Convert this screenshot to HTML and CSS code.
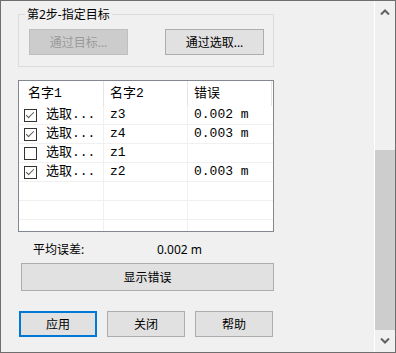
FILE: index.html
```html
<!DOCTYPE html>
<html lang="zh-CN">
<head>
    <meta charset="UTF-8">
    <title>指定目标</title>
    <link rel="stylesheet" href="styles.css">
</head>
<body>
    <div class="window">
        <div class="content">
            <fieldset class="group">
                <legend>第2步-指定目标</legend>
                <div class="group-buttons">
                    <button class="btn" disabled>通过目标...</button>
                    <button class="btn">通过选取...</button>
                </div>
            </fieldset>

            <div class="list">
                <div class="list-head">
                    <div class="cell first">名字1</div>
                    <div class="cell">名字2</div>
                    <div class="cell">错误</div>
                </div>
                <div class="list-row">
                    <div class="cell first"><span class="check on"></span>选取...</div>
                    <div class="cell">z3</div>
                    <div class="cell">0.002 m</div>
                </div>
                <div class="list-row">
                    <div class="cell first"><span class="check on"></span>选取...</div>
                    <div class="cell">z4</div>
                    <div class="cell">0.003 m</div>
                </div>
                <div class="list-row">
                    <div class="cell first"><span class="check"></span>选取...</div>
                    <div class="cell">z1</div>
                    <div class="cell"></div>
                </div>
                <div class="list-row">
                    <div class="cell first"><span class="check on"></span>选取...</div>
                    <div class="cell">z2</div>
                    <div class="cell">0.003 m</div>
                </div>
                <div class="list-row"><div class="cell"></div><div class="cell"></div><div class="cell"></div></div>
                <div class="list-row"><div class="cell"></div><div class="cell"></div><div class="cell"></div></div>
                <div class="list-row"><div class="cell"></div><div class="cell"></div><div class="cell"></div></div>
            </div>

            <div class="avg">
                <span class="avg-label">平均误差:</span>
                <span>0.002 m</span>
            </div>

            <button class="btn wide">显示错误</button>

            <div class="actions">
                <button class="btn default">应用</button>
                <button class="btn">关闭</button>
                <button class="btn">帮助</button>
            </div>
        </div>

        <div class="scrollbar">
            <div class="arrow">
                <svg width="10" height="6" viewBox="0 0 10 6"><polyline points="1,5.5 5,1.5 9,5.5" fill="none" stroke="#606060" stroke-width="2"/></svg>
            </div>
            <div class="track"></div>
            <div class="thumb"></div>
            <div class="arrow">
                <svg width="10" height="6" viewBox="0 0 10 6"><polyline points="1,0.5 5,4.5 9,0.5" fill="none" stroke="#606060" stroke-width="2"/></svg>
            </div>
        </div>
    </div>
</body>
</html>
```

FILE: styles.css
```css
* {
    box-sizing: border-box;
}

body {
    margin: 0;
    font-family: "Noto Sans", "Noto Sans CJK SC", sans-serif;
    font-size: 12px;
    color: #000;
}

.window {
    width: 396px;
    height: 353px;
    border: 1px solid #6e6e6e;
    background-color: #f0f0f0;
    display: flex;
    overflow: hidden;
}

.content {
    width: 373px;
    padding: 5px 0 0 17px;
}

/* group box */
.group {
    width: 256px;
    margin: 0;
    padding: 6px 9px 11px 10px;
    border: 1px solid #dcdcdc;
    min-width: 0;
}

.group legend {
    padding: 0 2px;
    margin-left: -4px;
    line-height: 17px;
}

.group-buttons {
    display: flex;
    gap: 37px;
}

.btn {
    font-family: inherit;
    font-size: 12px;
    color: #000;
    background-color: #e1e1e1;
    border: 1px solid #adadad;
    border-radius: 0;
    padding: 0;
    height: 26px;
    width: 99px;
}

.btn:disabled {
    background-color: #cccccc;
    border-color: #bfbfbf;
    color: #9a9a9a;
}

/* list view */
.list {
    margin-top: 13px;
    width: 256px;
    height: 152px;
    border: 1px solid #828790;
    background-color: #fff;
    overflow: hidden;
    font-family: "Liberation Mono", "Noto Sans CJK SC", monospace;
    font-size: 13px;
}

.list-head {
    display: grid;
    grid-template-columns: 85px 84px 84px;
    height: 25px;
    line-height: 25px;
}

.list-head .cell {
    border-right: 1px solid #e5e5e5;
    padding-left: 6px;
}

.list-head .cell.first {
    padding-left: 9px;
}

.list-row {
    display: grid;
    grid-template-columns: 85px 84px 1fr;
    height: 19px;
    line-height: 18px;
    border-bottom: 1px solid #f0f0f0;
}

.list-row .cell {
    border-right: 1px solid #f0f0f0;
    padding-left: 6px;
    white-space: nowrap;
}

.list-row .cell:last-child {
    border-right: none;
}

.list-row .cell.first {
    display: flex;
    align-items: center;
    gap: 9px;
    padding-left: 5px;
}

.check {
    width: 13px;
    height: 13px;
    border: 1px solid #333;
    background-color: #fff;
    flex-shrink: 0;
    position: relative;
}

.check.on::after {
    content: "";
    position: absolute;
    left: 3px;
    top: 0px;
    width: 3px;
    height: 7px;
    border-right: 1px solid #555;
    border-bottom: 1px solid #555;
    transform: rotate(45deg);
}

/* summary */
.avg {
    margin-top: 9px;
    padding-left: 15px;
    line-height: 17px;
    display: flex;
}

.avg-label {
    width: 124px;
}

.btn.wide {
    display: block;
    margin: 5px 0 0 3px;
    width: 253px;
    height: 28px;
}

.actions {
    display: flex;
    gap: 10px;
    margin: 20px 0 0 1px;
}

.actions .btn {
    width: 78px;
    height: 26px;
}

.btn.default {
    border: 2px solid #0078d7;
}

/* scrollbar */
.scrollbar {
    width: 21px;
    border-left: 1px solid #fff;
    display: flex;
    flex-direction: column;
}

.arrow {
    height: 21px;
    display: flex;
    align-items: center;
    justify-content: center;
}

.track {
    height: 128px;
}

.thumb {
    height: 180px;
    background-color: #cdcdcd;
}
```
